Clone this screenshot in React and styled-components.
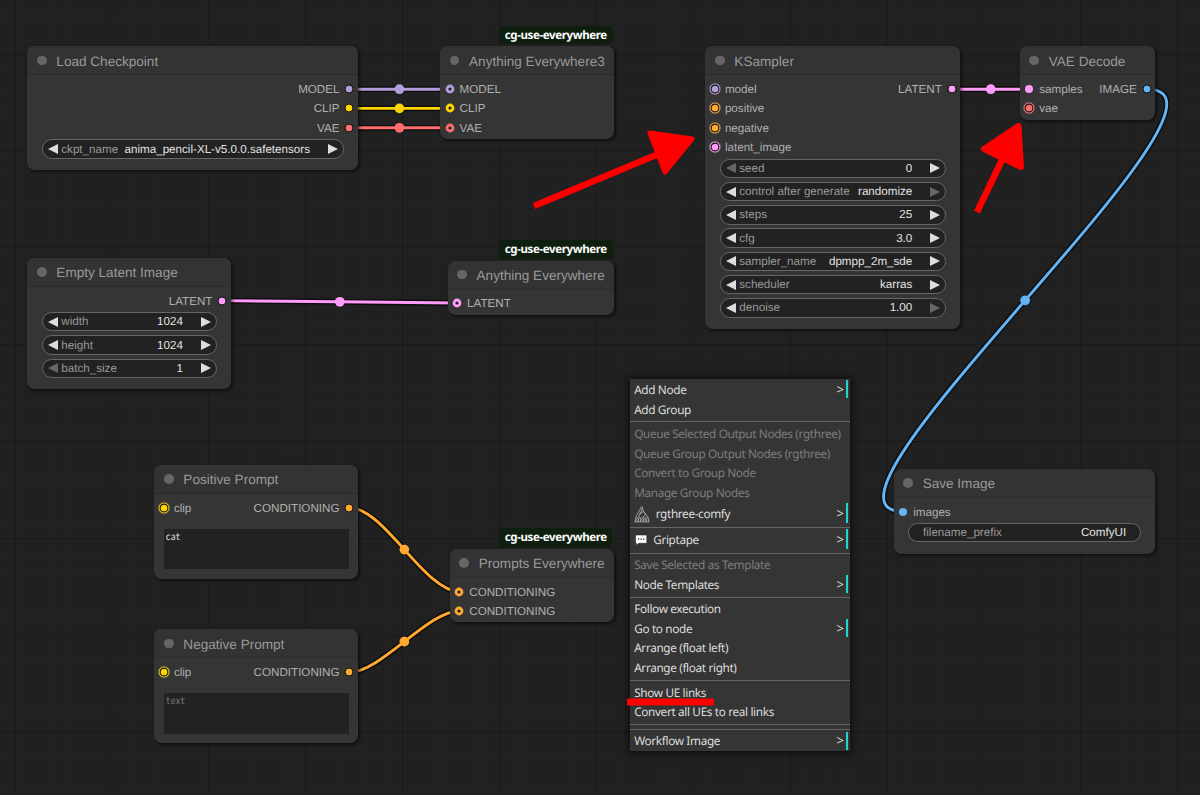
import React from 'react';
import styled, { createGlobalStyle } from 'styled-components';

// //////////////// GLOBAL //////////////// //
const GlobalStyle = createGlobalStyle`
  * {
    box-sizing: border-box;
  }

  body {
    margin: 0;
    background: #212121;
    overflow: hidden;
    text-rendering: geometricPrecision;
  }
`;

// one graph unit on screen
const UNIT = 0.969;

const colors = {
  model: '#b39ddb',
  clip: '#ffd500',
  vae: '#ff6e6e',
  latent: '#ff9cf9',
  image: '#64b5f6',
  conditioning: '#ffa931',
};

// //////////////// CANVAS //////////////// //
const Canvas = styled.main`
  position: relative;
  width: 1200px;
  height: 795px;
  overflow: hidden;
  font-family: "Liberation Sans", Arial, sans-serif;
  background-color: #212121;
  background-image:
    linear-gradient(to right, rgba(0, 0, 0, 0.16) 1px, transparent 1px),
    linear-gradient(to bottom, rgba(0, 0, 0, 0.16) 1px, transparent 1px),
    linear-gradient(to right, rgba(0, 0, 0, 0.06) 1px, transparent 1px),
    linear-gradient(to bottom, rgba(0, 0, 0, 0.06) 1px, transparent 1px);
  background-size: 96.9px 96.9px, 96.9px 96.9px, 9.69px 9.69px, 9.69px 9.69px;
  background-position: 14.5px 53.5px;
`;

const Overlay = styled.svg`
  position: absolute;
  inset: 0;
  pointer-events: none;
`;

// //////////////// NODE //////////////// //
const NodeFrame = styled.section`
  position: absolute;
  left: ${(p) => p.$x}px;
  top: ${(p) => p.$y}px;
  width: ${(p) => p.$w}px;
  height: ${(p) => p.$h}px;
  border-radius: 7.5px;
  background: #353535;
  box-shadow: 1.5px 1.5px 3px rgba(0, 0, 0, 0.5);
`;

const NodeTitle = styled.header`
  display: flex;
  align-items: center;
  height: 29.1px;
  padding-left: 9.7px;
  gap: 9.7px;
  font-size: 13.57px;
  line-height: 29px;
  white-space: nowrap;
  color: #999;
  background: #333;
  border-radius: 7.5px 7.5px 0 0;
  border-bottom: 1px solid #2b2b2b;

  &::before {
    content: "";
    flex: none;
    width: 9.7px;
    height: 9.7px;
    border-radius: 50%;
    background: #666;
  }
`;

const TitleText = styled.span`
  padding-top: 1.4px;
`;

const Slots = styled.div`
  padding: 4px 3.5px 0 4.6px;
`;

const SlotRow = styled.div`
  display: flex;
  justify-content: space-between;
  height: 19.38px;
`;

const Slot = styled.div`
  display: flex;
  flex-direction: ${(p) => (p.$out ? 'row-reverse' : 'row')};
  align-items: center;
  gap: 5px;
  font-size: 11.63px;
  line-height: 20px;
  color: #b0b0b0;

  span {
    padding-top: 2px;
  }
`;

const Port = styled.svg`
  width: 10px;
  height: 18px;
  flex: none;
  overflow: visible;
`;

const Widgets = styled.div`
  display: flex;
  flex-direction: column;
  gap: 3.87px;
  padding: 1.8px 14px 0 14.4px;
`;

const Pill = styled.div`
  display: flex;
  align-items: center;
  height: 19.4px;
  padding: 0 ${(p) => (p.$plain ? 14 : 5)}px;
  font-size: 11.63px;
  line-height: 17px;
  white-space: nowrap;
  color: #999;
  background: #222;
  border: 1px solid #666;
  border-radius: 10px;
`;

const Value = styled.span`
  margin-left: auto;
  margin-right: ${(p) => (p.$plain ? 0 : 18)}px;
  color: #e2e2e2;
`;

const Arrow = styled.svg`
  flex: none;
  width: 10px;
  height: 10px;
  margin-right: ${(p) => (p.$left ? 3.6 : 0)}px;
  fill: ${(p) => (p.$dim ? '#666' : '#ddd')};
`;

const Prompt = styled.div`
  height: 40.5px;
  margin: 11.5px 9.3px 0 9.5px;
  padding: 1px 2px;
  font: 9.7px/12px "Noto Sans Mono CJK SC", "Noto Sans Mono CJK JP", "Liberation Mono", monospace;
  color: ${(p) => (p.$placeholder ? '#757575' : '#ddd')};
  background: #222;
`;

const Badge = styled.div`
  position: absolute;
  right: 1.5px;
  top: -20.6px;
  width: 113.5px;
  height: 18.5px;
  padding-top: 1.2px;
  border-radius: 4px;
  background: #0f1f0f;
  color: #fff;
  text-align: center;
  white-space: nowrap;
  font: 700 11.5px/18px "Noto Sans", sans-serif;
  letter-spacing: -0.37px;
`;

// input: kind <- 'out', 'linked', 'hollow' or 'glow'
const PortDot = ({ color, kind }) => (
  <Port viewBox="0 0 10 18">
    {kind === 'glow' && (
      <>
        <circle cx="5" cy="9" r="6.2" fill={color} opacity="0.2" />
        <circle cx="5" cy="9" r="5.2" fill={color} stroke="#ddd" strokeOpacity="0.4" strokeWidth="0.6" />
        <circle cx="5" cy="9" r="3.9" fill={color} stroke="#111" strokeWidth="1.1" />
      </>
    )}
    {kind === 'out' && <circle cx="5" cy="9" r="4" fill={color} stroke="#111" strokeWidth="1" />}
    {kind === 'linked' && <circle cx="5" cy="9" r="4" fill={color} />}
    {kind === 'hollow' && <circle cx="5" cy="9" r="3" fill="#222" stroke={color} strokeWidth="2.8" />}
  </Port>
);

const Widget = ({ label, value, plain, first, last }) => (
  <Pill $plain={plain}>
    {!plain && <Arrow $left $dim={first} viewBox="0 0 10 10"><path d="M10 0 L0 5 L10 10Z" /></Arrow>}
    <span>{label}</span>
    <Value $plain={plain}>{value}</Value>
    {!plain && <Arrow $dim={last} viewBox="0 0 10 10"><path d="M0 0 L10 5 L0 10Z" /></Arrow>}
  </Pill>
);

const Node = ({ node }) => {
  const { inputs = [], outputs = [], widgets = [] } = node;
  const rows = [...Array(Math.max(inputs.length, outputs.length)).keys()];
  return (
    <NodeFrame $x={node.x} $y={node.y} $w={node.w} $h={node.h}>
      {node.badge && <Badge>cg-use-everywhere</Badge>}
      <NodeTitle><TitleText>{node.title}</TitleText></NodeTitle>
      <Slots>
        {rows.map((i) => (
          <SlotRow key={i}>
            {inputs[i] ? (
              <Slot>
                <PortDot color={colors[inputs[i][1]]} kind={inputs[i][2]} />
                <span>{inputs[i][0]}</span>
              </Slot>
            ) : <div />}
            {outputs[i] && (
              <Slot $out>
                <PortDot color={colors[outputs[i][1]]} kind="out" />
                <span>{outputs[i][0]}</span>
              </Slot>
            )}
          </SlotRow>
        ))}
      </Slots>
      {widgets.length > 0 && (
        <Widgets>
          {widgets.map((widget) => <Widget key={widget.label} {...widget} />)}
        </Widgets>
      )}
      {node.prompt && <Prompt $placeholder={node.placeholder}>{node.prompt}</Prompt>}
    </NodeFrame>
  );
};

const nodes = [
  {
    title: 'Load Checkpoint',
    x: 27.3,
    y: 46.3,
    w: 330.7,
    h: 123.7,
    outputs: [['MODEL', 'model'], ['CLIP', 'clip'], ['VAE', 'vae']],
    widgets: [{ label: 'ckpt_name', value: 'anima_pencil-XL-v5.0.0.safetensors' }],
  },
  {
    title: 'Anything Everywhere3',
    x: 440,
    y: 46.3,
    w: 174,
    h: 92.7,
    badge: true,
    inputs: [['MODEL', 'model', 'hollow'], ['CLIP', 'clip', 'hollow'], ['VAE', 'vae', 'hollow']],
  },
  {
    title: 'KSampler',
    x: 705.3,
    y: 46.3,
    w: 255,
    h: 282.7,
    inputs: [
      ['model', 'model', 'glow'],
      ['positive', 'conditioning', 'glow'],
      ['negative', 'conditioning', 'glow'],
      ['latent_image', 'latent', 'glow'],
    ],
    outputs: [['LATENT', 'latent']],
    widgets: [
      { label: 'seed', value: '0', first: true },
      { label: 'control after generate', value: 'randomize', last: true },
      { label: 'steps', value: '25' },
      { label: 'cfg', value: '3.0' },
      { label: 'sampler_name', value: 'dpmpp_2m_sde' },
      { label: 'scheduler', value: 'karras' },
      { label: 'denoise', value: '1.00', last: true },
    ],
  },
  {
    title: 'VAE Decode',
    x: 1019.7,
    y: 46.3,
    w: 135.5,
    h: 73.7,
    inputs: [['samples', 'latent', 'linked'], ['vae', 'vae', 'glow']],
    outputs: [['IMAGE', 'image']],
  },
  {
    title: 'Empty Latent Image',
    x: 27.3,
    y: 257.8,
    w: 203.7,
    h: 131.2,
    outputs: [['LATENT', 'latent']],
    widgets: [
      { label: 'width', value: '1024' },
      { label: 'height', value: '1024' },
      { label: 'batch_size', value: '1', first: true },
    ],
  },
  {
    title: 'Anything Everywhere',
    x: 447.5,
    y: 260.6,
    w: 166.5,
    h: 54,
    badge: true,
    inputs: [['LATENT', 'latent', 'hollow']],
  },
  {
    title: 'Positive Prompt',
    x: 154.3,
    y: 464.8,
    w: 203.7,
    h: 114,
    inputs: [['clip', 'clip', 'glow']],
    outputs: [['CONDITIONING', 'conditioning']],
    prompt: 'cat',
  },
  {
    title: 'Negative Prompt',
    x: 154.3,
    y: 629.4,
    w: 203.7,
    h: 114,
    inputs: [['clip', 'clip', 'glow']],
    outputs: [['CONDITIONING', 'conditioning']],
    prompt: 'text',
    placeholder: true,
  },
  {
    title: 'Prompts Everywhere',
    x: 449.7,
    y: 548.9,
    w: 164.3,
    h: 73,
    badge: true,
    inputs: [['CONDITIONING', 'conditioning', 'hollow'], ['CONDITIONING', 'conditioning', 'hollow']],
  },
  {
    title: 'Save Image',
    x: 893.6,
    y: 468.8,
    w: 261.6,
    h: 85,
    inputs: [['images', 'image', 'linked']],
    widgets: [{ label: 'filename_prefix', value: 'ComfyUI', plain: true }],
  },
];

// //////////////// LINKS //////////////// //
// [x1, y1, x2, y2, type]
const links = [
  [349.4, 89.2, 449.5, 89.2, 'model'],
  [349.4, 108.4, 449.5, 108.4, 'clip'],
  [349.4, 127.8, 449.5, 127.8, 'vae'],
  [952, 89.2, 1029.5, 89.2, 'latent'],
  [222.3, 300.6, 457.3, 303, 'latent'],
  [349.4, 507.6, 459.3, 591.6, 'conditioning'],
  [349.4, 672.3, 459.3, 611, 'conditioning'],
  [1147, 89.2, 903.3, 511.6, 'image'],
];

// spline handles reach out a quarter of the distance between the two slots
const getSpline = ([x1, y1, x2, y2]) => {
  const reach = Math.hypot(x2 - x1, y2 - y1) * 0.25;
  return `M${x1} ${y1} C${x1 + reach} ${y1} ${x2 - reach} ${y2} ${x2} ${y2}`;
};

const Links = ({ items }) => (
  <Overlay width="1200" height="795" fill="none">
    {items.map((link) => (
      <g key={link.join()}>
        <path d={getSpline(link)} stroke="#000" strokeOpacity="0.6" strokeWidth={6 * UNIT} />
        <path d={getSpline(link)} stroke={colors[link[4]]} strokeWidth={3 * UNIT} />
        <circle
          cx={(link[0] + link[2]) / 2}
          cy={(link[1] + link[3]) / 2}
          r={5 * UNIT}
          fill={colors[link[4]]}
        />
      </g>
    ))}
  </Overlay>
);

// //////////////// CONTEXT MENU //////////////// //
const Menu = styled.nav`
  position: absolute;
  left: 630.4px;
  top: 378.6px;
  width: 219.8px;
  height: 372px;
  padding: 1.6px 2px 0 0;
  background: #353535;
  box-shadow: 0 0 8px 2px rgba(0, 0, 0, 0.6);
  font-family: "Noto Sans", sans-serif;
  font-size: 11.8px;
  letter-spacing: -0.36px;
`;

const MenuItem = styled.div`
  display: flex;
  align-items: center;
  height: ${(p) => p.$h || 18}px;
  margin-bottom: 1.65px;
  padding: 2.4px 0 0 3.8px;
  line-height: 15px;
  white-space: nowrap;
  color: ${(p) => (p.$disabled ? '#7d7d7d' : '#ddd')};
  border-right: 2.6px solid ${(p) => (p.$submenu ? '#1fd5d0' : 'transparent')};

  svg {
    margin-right: ${(p) => p.$iconGap || 0}px;
  }
`;

const Chevron = styled.span`
  margin-left: auto;
  margin-right: 2.5px;
  padding-bottom: 2px;
  font-size: 13px;
`;

const Divider = styled.div`
  height: 4.8px;
  padding-top: 2px;
  margin-right: -2px;

  &::before {
    content: "";
    display: block;
    height: 1px;
    background: #666;
  }
`;

const CraneIcon = () => (
  <svg width="16" height="17" viewBox="0 0 16 17" fill="none" stroke="#aaa" strokeWidth="0.9">
    <path d="M1.5 11.5 L7.5 0.8 L8.8 1.6 L4.5 11.5 M8 1.2 L10 6.5" />
    <path d="M5 8.5 L9.5 5.5 L11.5 8 L9 11.5 M11 7 L14 11.5" />
    <path d="M1 12 H15 M0.3 15.8 H15.7" strokeWidth="1" />
    <path d="M1 14 H15" strokeDasharray="1.4 1.2" strokeWidth="1.8" />
  </svg>
);

const BubbleIcon = () => (
  <svg width="14" height="12" viewBox="0 0 14 12">
    <path d="M1.5 1 H12.8 V9.3 H5 L2.2 11.2 L2.4 9.3 H1.5Z" fill="#fff" stroke="#222" strokeWidth="0.6" />
    <path d="M3.9 4.4h1.3v1.3h-1.3z M6.5 4.4h1.3v1.3h-1.3z M9.1 4.4h1.3v1.3h-1.3z" fill="#222" />
  </svg>
);

const menu = [
  { label: 'Add Node', submenu: true },
  { label: 'Add Group' },
  null,
  { label: 'Queue Selected Output Nodes (rgthree)', disabled: true },
  { label: 'Queue Group Output Nodes (rgthree)', disabled: true },
  { label: 'Convert to Group Node', disabled: true },
  { label: 'Manage Group Nodes', disabled: true },
  { label: 'rgthree-comfy', submenu: true, height: 20.2, icon: <CraneIcon />, iconGap: 5.5 },
  null,
  { label: 'Griptape', submenu: true, height: 19.5, icon: <BubbleIcon />, iconGap: 5 },
  null,
  { label: 'Save Selected as Template', disabled: true },
  { label: 'Node Templates', submenu: true },
  null,
  { label: 'Follow execution' },
  { label: 'Go to node', submenu: true },
  { label: 'Arrange (float left)' },
  { label: 'Arrange (float right)' },
  null,
  { label: 'Show UE links' },
  { label: 'Convert all UEs to real links' },
  null,
  null,
  { label: 'Workflow Image', submenu: true },
];

const ContextMenu = () => (
  <Menu>
    {menu.map((item, index) => (item ? (
      <MenuItem
        key={index}
        $disabled={item.disabled}
        $submenu={item.submenu}
        $h={item.height}
        $iconGap={item.iconGap}
      >
        {item.icon}
        {item.label}
        {item.submenu && <Chevron>&gt;</Chevron>}
      </MenuItem>
    ) : <Divider key={index} />))}
  </Menu>
);

// //////////////// MARKER //////////////// //
const Marker = () => (
  <Overlay width="1200" height="795" fill="#f00" stroke="#f00" strokeLinejoin="round">
    <path d="M534 206 L662 152.5" strokeWidth="6.5" />
    <path d="M650 133 L692 139 L665 172Z" strokeWidth="5" />
    <path d="M977 212 L1003 158" strokeWidth="6.5" />
    <path d="M1018.5 126 L984 149 L1021 167Z" strokeWidth="6" />
    <path d="M627 702 H714" strokeWidth="7" />
  </Overlay>
);

// //////////////// MAIN COMPONENT //////////////// //
const App = () => (
  <>
    <GlobalStyle />
    <Canvas>
      <Links items={links} />
      {nodes.map((node) => <Node key={node.title} node={node} />)}
      <ContextMenu />
      <Marker />
    </Canvas>
  </>
);

export default App;
